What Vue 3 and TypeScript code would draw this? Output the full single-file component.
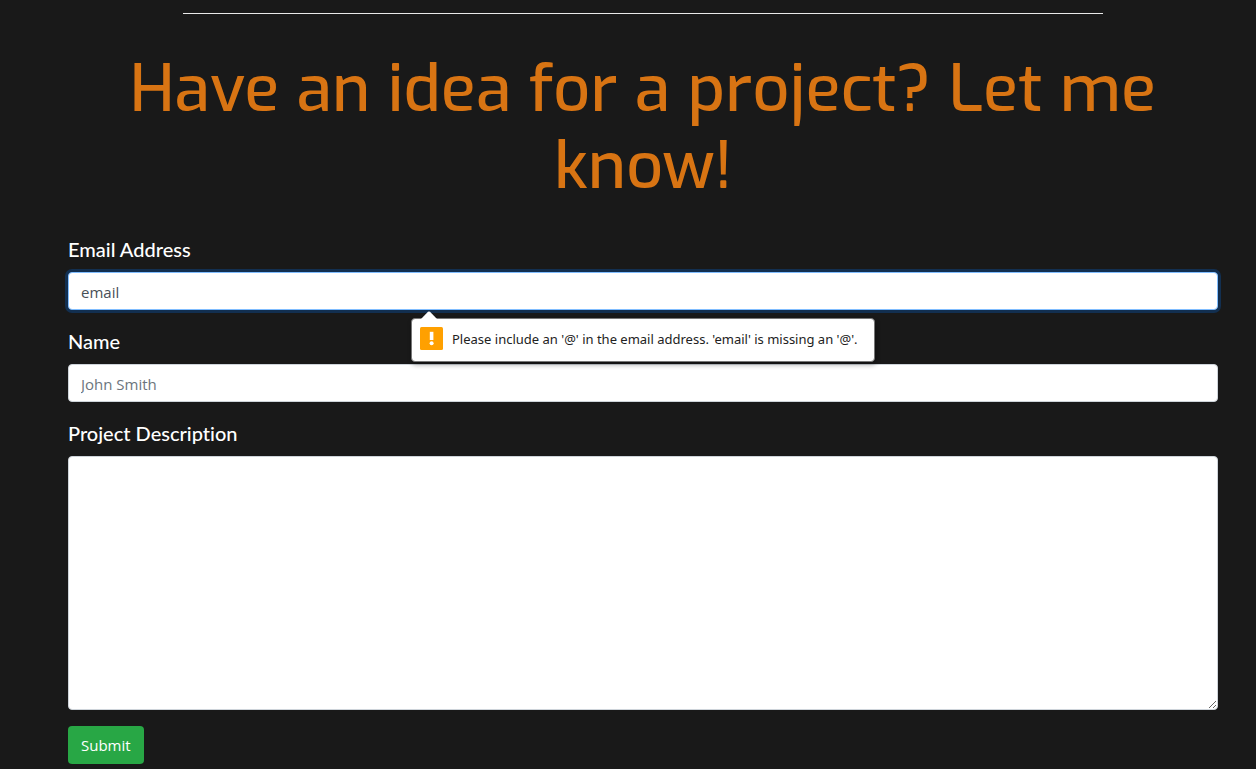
<script setup lang="ts">
import { computed, ref } from 'vue'

const email = ref('email')
const name = ref('')
const description = ref('')

const emailError = computed(() =>
  email.value.includes('@')
    ? ''
    : `Please include an '@' in the email address. '${email.value}' is missing an '@'.`,
)
</script>

<template>
  <main class="contact">
    <hr class="divider" />
    <h1 class="title">Have an idea for a project? Let me know!</h1>
    <form novalidate @submit.prevent>
      <div class="group">
        <label for="email">Email Address</label>
        <div class="field">
          <input
            id="email"
            v-model="email"
            class="control active"
            type="email"
            aria-describedby="email-error"
          />
          <div v-if="emailError" id="email-error" class="bubble" role="alert">
            <svg class="arrow" width="18" height="9" viewBox="0 0 18 9" aria-hidden="true">
              <path d="M0 9 L8 0.8 Q9 0 10 0.8 L18 9 Z" fill="#fff" />
            </svg>
            <svg class="warning" width="23" height="23" viewBox="0 0 23 23" aria-hidden="true">
              <rect width="23" height="23" rx="1.5" fill="#ffa000" />
              <path d="M9.8 4.8h3.6v8.2h-3.6z" fill="#fff" />
              <circle cx="11.6" cy="16.2" r="2" fill="#fff" />
            </svg>
            <span>{{ emailError }}</span>
          </div>
        </div>
      </div>
      <div class="group">
        <label for="name">Name</label>
        <input id="name" v-model="name" class="control" type="text" placeholder="John Smith" />
      </div>
      <div class="group">
        <label for="description">Project Description</label>
        <textarea id="description" v-model="description" class="control" rows="10"></textarea>
      </div>
      <button class="submit" type="submit">Submit</button>
    </form>
  </main>
</template>

<style>
body {
  margin: 0;
  background: #191919;
}
</style>

<style scoped>
* {
  box-sizing: border-box;
}

.contact {
  padding: 13px 38px 5px 68px;
  font-family: 'Open Sans', 'Noto Sans', sans-serif;
  font-size: 15px;
  line-height: 24px;
}

.divider {
  width: 80%;
  height: 1px;
  margin: 0 auto 37px;
  border: 0;
  background: #e9e9e9;
}

.title {
  margin: 0 0 29px;
  color: #d87413;
  font-family: Exo, 'Exo 2', 'Noto Sans', sans-serif;
  font-size: 65px;
  font-weight: 500;
  line-height: 77px;
  text-align: center;
}

.group {
  margin-bottom: 16px;
}

label {
  display: block;
  margin-bottom: 8px;
  color: #fff;
  font-family: Lato, sans-serif;
  font-size: 20px;
  font-weight: 500;
  font-variant-ligatures: none;
  line-height: 30px;
}

.field {
  position: relative;
}

.control {
  display: block;
  width: 100%;
  padding: 7px 12px 5px;
  border: 1px solid #ced4da;
  border-radius: 4px;
  outline: 0;
  background: #fff;
  color: #495057;
  font: inherit;
}

input.control {
  height: 38px;
}

.control::placeholder {
  color: #6c757d;
  opacity: 1;
}

.control.active {
  border-color: #80bdff;
  box-shadow: 0 0 0 3px #122f50;
}

.bubble {
  position: absolute;
  top: 46px;
  left: 50%;
  z-index: 1;
  display: flex;
  align-items: center;
  gap: 9px;
  min-width: 464px;
  height: 44px;
  padding: 0 8px 3px;
  border: 1px solid #777;
  border-radius: 4px;
  background: #fff;
  box-shadow: 1px 3px 5px rgba(0, 0, 0, 0.3);
  color: #222;
  font-family: 'Noto Sans', sans-serif;
  font-size: 13px;
  white-space: nowrap;
  transform: translateX(-50%);
}

.arrow {
  position: absolute;
  top: -8px;
  left: 8px;
}

.submit {
  display: block;
  height: 38px;
  padding: 0 13px;
  border: 0;
  border-radius: 4px;
  background: #28a745;
  color: #fff;
  font: inherit;
}
</style>
